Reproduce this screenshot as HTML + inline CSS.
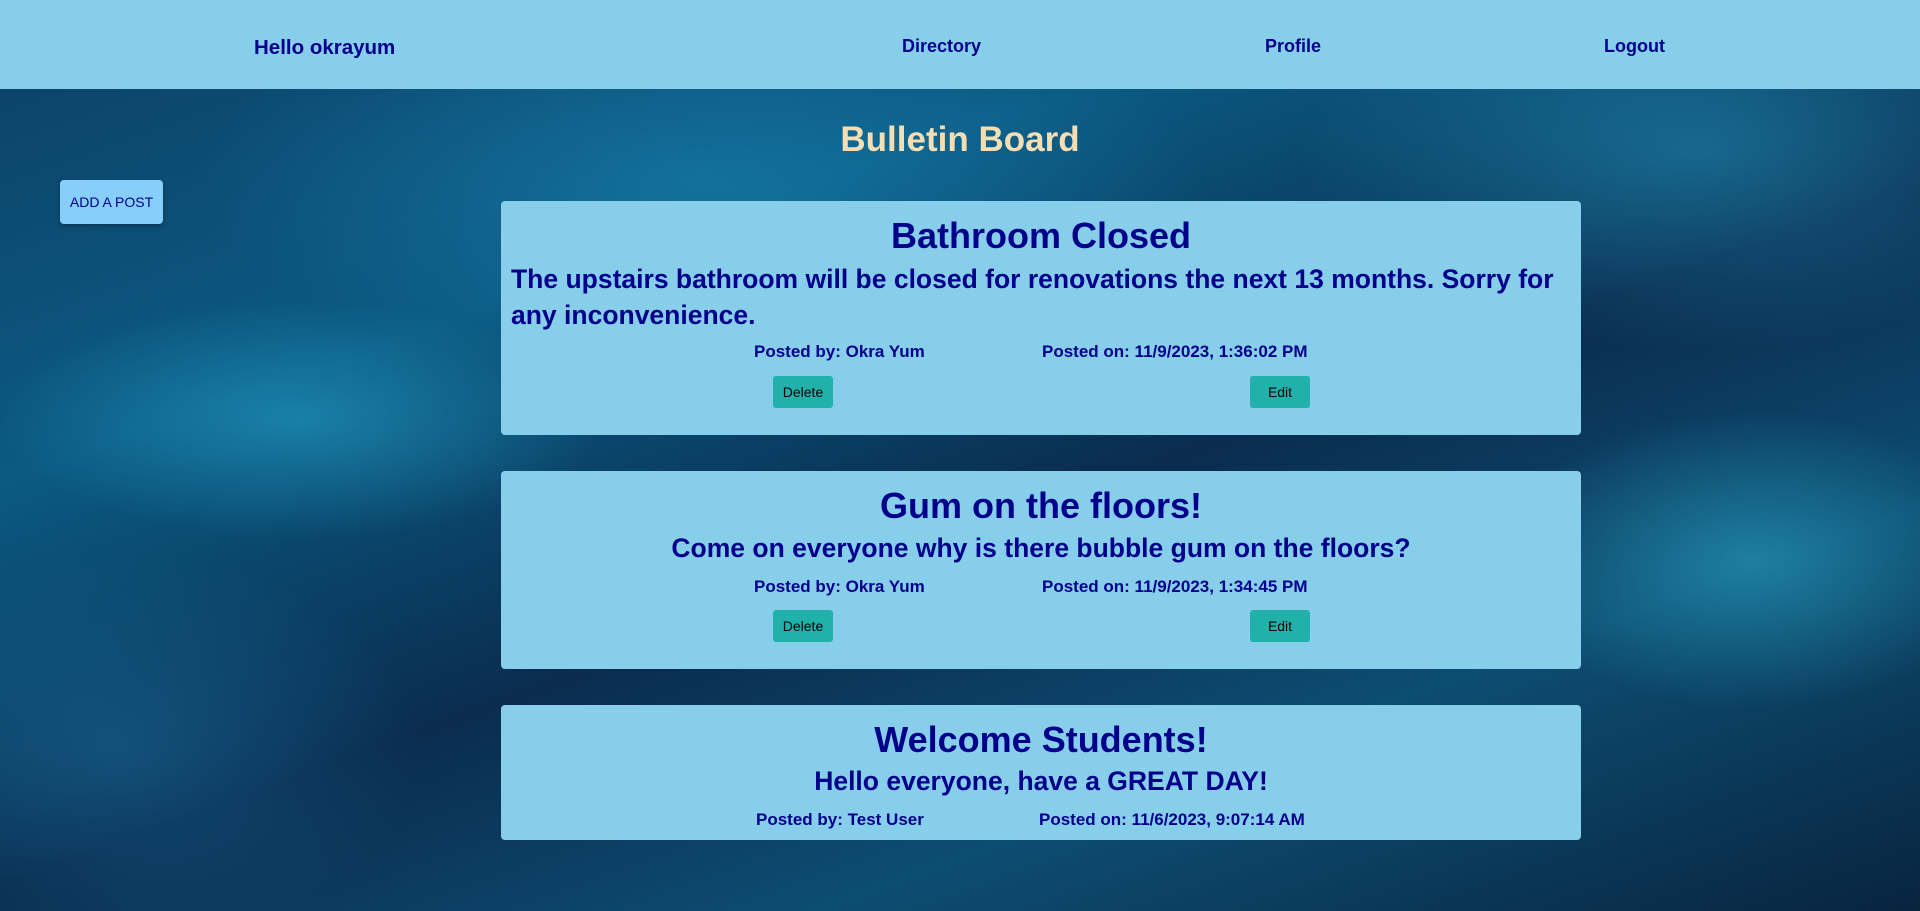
<!DOCTYPE html>
<html><head><meta charset="utf-8"><style>
*{margin:0;padding:0;box-sizing:border-box}
body{width:1920px;height:911px;overflow:hidden;font-family:"Liberation Sans",sans-serif;color:#00008b;
background:
radial-gradient(ellipse 300px 120px at 300px 420px,rgba(40,170,210,.5),transparent),
radial-gradient(ellipse 250px 150px at 1750px 560px,rgba(50,190,220,.45),transparent),
radial-gradient(ellipse 400px 200px at 1700px 150px,rgba(40,160,200,.45),transparent),
radial-gradient(ellipse 300px 200px at 120px 750px,rgba(30,120,170,.4),transparent),
radial-gradient(ellipse 500px 200px at 700px 180px,rgba(30,150,200,.4),transparent),
linear-gradient(160deg,#0d3f66 0%,#0b5a82 30%,#0a2c4f 55%,#0d4d72 75%,#08243f 100%);position:relative}
nav{position:absolute;left:0;top:0;width:1920px;height:89px;background:#87ceeb;font-weight:bold;font-size:18px}
nav span{position:absolute;top:36px}
h1{position:absolute;top:120px;width:100%;text-align:center;color:#f5deb3;font-size:35px}
.add{position:absolute;left:60px;top:180px;width:103px;height:44px;background:#87cefa;border-radius:4px;font-size:14px;display:flex;align-items:center;justify-content:center;color:#00008b;box-shadow:0 2px 4px rgba(0,0,0,.3)}
.card{position:absolute;left:501px;width:1080px;background:#87ceeb;border-radius:4px}
.t{position:absolute;width:100%;text-align:center;font-weight:bold;font-size:36px}
.b{position:absolute;font-weight:bold;font-size:26.5px;line-height:36px}
.p{position:absolute;font-weight:bold;font-size:17px}
.btn{position:absolute;width:60px;height:32px;background:#20b2aa;border-radius:3px;font-size:14px;color:#000;display:flex;align-items:center;justify-content:center}
</style></head><body>
<nav><span style="left:254px;font-size:20.5px">Hello okrayum</span><span style="left:902px">Directory</span><span style="left:1265px">Profile</span><span style="left:1604px">Logout</span></nav>
<h1>Bulletin Board</h1>
<div class="add">ADD A POST</div>

<div class="card" style="top:201px;height:234px">
<div class="t" style="top:14px">Bathroom Closed</div>
<div class="b" style="left:10px;top:60px;width:1062px">The upstairs bathroom will be closed for renovations the next 13 months. Sorry for any inconvenience.</div>
<div class="p" style="left:253px;top:141px">Posted by: Okra Yum</div>
<div class="p" style="left:541px;top:141px">Posted on: 11/9/2023, 1:36:02 PM</div>
<div class="btn" style="left:272px;top:175px">Delete</div>
<div class="btn" style="left:749px;top:175px">Edit</div>
</div>

<div class="card" style="top:471px;height:198px">
<div class="t" style="top:14px">Gum on the floors!</div>
<div class="b" style="left:0;width:100%;text-align:center;top:59px">Come on everyone why is there bubble gum on the floors?</div>
<div class="p" style="left:253px;top:106px">Posted by: Okra Yum</div>
<div class="p" style="left:541px;top:106px">Posted on: 11/9/2023, 1:34:45 PM</div>
<div class="btn" style="left:272px;top:139px">Delete</div>
<div class="btn" style="left:749px;top:139px">Edit</div>
</div>

<div class="card" style="top:705px;height:135px">
<div class="t" style="top:14px">Welcome Students!</div>
<div class="b" style="left:0;width:100%;text-align:center;top:58px">Hello everyone, have a GREAT DAY!</div>
<div class="p" style="left:255px;top:105px">Posted by: Test User</div>
<div class="p" style="left:538px;top:105px">Posted on: 11/6/2023, 9:07:14 AM</div>
</div>
</body></html>
